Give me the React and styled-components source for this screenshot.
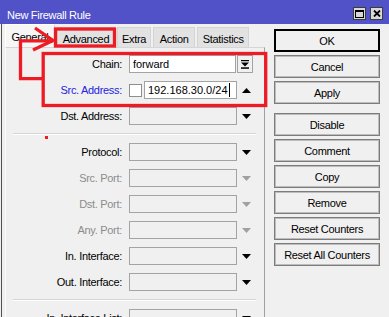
import React from 'react';
import styled, { createGlobalStyle } from 'styled-components';

const GlobalStyle = createGlobalStyle`
  html, body {
    margin: 0;
    padding: 0;
    background: #f0f0f0;
  }
  body {
    font-family: "Liberation Sans", Arial, sans-serif;
    font-size: 11px;
    letter-spacing: -0.3px;
    color: #000;
  }
`;

const Window = styled.div`
  position: relative;
  width: 389px;
  height: 317px;
  overflow: hidden;
  background: #f0f0f0;
  display: flex;
  flex-direction: column;
`;

const TitleBar = styled.div`
  height: 24px;
  flex: none;
  background: #5252c8;
  color: #fff;
  display: flex;
  align-items: flex-start;
  padding: 0 6px 0 7px;
`;

const Title = styled.div`
  margin-top: 9px;
  flex: 1;
`;

const TitleButton = styled.div`
  width: 13px;
  height: 13px;
  margin-top: 7px;
  margin-left: 4px;
  box-sizing: border-box;
  border: 1px solid #3c3c3c;
  background: #d8d8d8;
  display: flex;
  align-items: center;
  justify-content: center;
`;

const Body = styled.div`
  flex: 1;
  display: flex;
  margin-left: 1px;
  border-left: 1px solid #505050;
  min-height: 0;
`;

// left side: tabs + form
const TabArea = styled.div`
  margin-left: 3px;
  width: 260px;
  display: flex;
  flex-direction: column;
`;

const TabRow = styled.div`
  height: 24px;
  display: flex;
  align-items: flex-end;
  gap: 2px;
`;

const Tab = styled.div`
  box-sizing: border-box;
  height: ${(p) => (p.$active ? '23px' : '20px')};
  padding: 2px 4px 0;
  display: flex;
  align-items: center;
  justify-content: center;
  min-width: ${(p) => p.$w || 0}px;
  background: ${(p) => (p.$active ? '#f6f6f6' : '#e2e2e2')};
  border: 1px solid #d4d4d4;
  border-bottom: none;
  ${(p) => p.$active && 'border-left-color: #fff; border-top-color: #fff;'}
`;

const Panel = styled.div`
  flex: 1;
  border-top: 1px solid #d6d6d6;
  border-left: 1px solid #fafafa;
  border-right: 1px solid #a0a0a0;
  padding-top: 7px;
  display: flex;
  flex-direction: column;
  gap: 8px;
`;

const Row = styled.div`
  height: 18px;
  flex: none;
  display: flex;
  align-items: center;
`;

const Label = styled.div`
  width: 116px;
  margin-right: 7px;
  text-align: right;
  white-space: nowrap;
  color: ${(p) => (p.$tone === 'blue' ? '#2424e0' : p.$tone === 'off' ? '#8c8c8c' : '#000')};
`;

const Field = styled.div`
  box-sizing: border-box;
  width: ${(p) => p.$w || 108}px;
  height: 18px;
  border: 1px solid #a3a3a3;
  background: ${(p) => (p.$white ? '#fff' : '#f0f0f0')};
  display: flex;
  align-items: center;
  padding-left: 3px;
  letter-spacing: ${(p) => (p.$tight ? '0' : '-0.1px')};
  white-space: nowrap;
  overflow: hidden;
`;

const Caret = styled.span`
  display: inline-block;
  width: 1px;
  height: 14px;
  background: #000;
  margin-left: 1px;
`;

const Check = styled.div`
  box-sizing: border-box;
  width: 13px;
  height: 13px;
  border: 1px solid #8e8e8e;
  background: #fff;
  margin-right: 2px;
`;

const Slot = styled.div`
  width: 16px;
  padding-left: 5px;
  box-sizing: border-box;
  display: flex;
  align-items: center;
`;

const DropButton = styled.div`
  box-sizing: border-box;
  width: 16px;
  height: 18px;
  margin-left: 1px;
  border: 1px solid #a3a3a3;
  background: #f0f0f0;
  display: flex;
  align-items: center;
  justify-content: center;
`;

const Separator = styled.div`
  flex: none;
  height: 1px;
  margin: 0 8px 0 7px;
  background: #d6d6d6;
  border-bottom: 1px solid #fff;
`;

// right side: buttons
const ButtonColumn = styled.div`
  margin-left: 9px;
  padding-top: 5px;
  width: 106px;
  display: flex;
  flex-direction: column;
  gap: 3px;
`;

const Button = styled.div`
  box-sizing: border-box;
  height: 23px;
  flex: none;
  display: flex;
  align-items: center;
  justify-content: center;
  background: #f0f0f0;
  border: 1px solid ${(p) => (p.$primary ? '#000' : '#7c7c7c')};
  box-shadow: inset 0 0 0 1px ${(p) => (p.$primary ? '#000' : '#bdbdbd')};
  margin-top: ${(p) => (p.$spaced ? '6px' : '0')};
`;

const Annotations = styled.svg`
  position: absolute;
  left: 0;
  top: 0;
  pointer-events: none;
`;

const Arrow = ({ dir = 'down', off }) => (
  <svg width="9" height="5" viewBox="0 0 9 5">
    <polygon
      points={dir === 'down' ? '0,0 9,0 4.5,5' : '0,5 9,5 4.5,0'}
      fill={off ? '#a0a0a0' : '#000'}
    />
  </svg>
);

const rows = [
  { label: 'Protocol:' },
  { label: 'Src. Port:', off: true },
  { label: 'Dst. Port:', off: true },
  { label: 'Any. Port:', off: true },
  { label: 'In. Interface:' },
  { label: 'Out. Interface:' },
];

const buttons = ['OK', 'Cancel', 'Apply', 'Disable', 'Comment', 'Copy', 'Remove', 'Reset Counters', 'Reset All Counters'];

const App = () => {
  return (
    <Window>
      <GlobalStyle />
      <TitleBar>
        <Title>New Firewall Rule</Title>
        <TitleButton>
          <svg width="9" height="8" viewBox="0 0 9 8">
            <rect x="0.5" y="0.5" width="8" height="7" fill="none" stroke="#000" strokeWidth="1" />
            <rect x="0" y="0" width="9" height="2" fill="#000" />
          </svg>
        </TitleButton>
        <TitleButton>
          <svg width="8" height="7" viewBox="0 0 8 7">
            <path d="M1 0.5 L7 6.5 M7 0.5 L1 6.5" stroke="#000" strokeWidth="1.8" />
          </svg>
        </TitleButton>
      </TitleBar>

      <Body>
        <TabArea>
          <TabRow>
            <Tab $active $w={50}>General</Tab>
            <Tab $w={58}>Advanced</Tab>
            <Tab $w={34}>Extra</Tab>
            <Tab $w={42}>Action</Tab>
            <Tab $w={52}>Statistics</Tab>
          </TabRow>
          <Panel>
            <Row>
              <Label>Chain:</Label>
              <Field $w={107} $white>forward</Field>
              <DropButton>
                <svg width="8" height="9" viewBox="0 0 8 9">
                  <rect x="0" y="0" width="8" height="1.2" fill="#000" />
                  <polygon points="0,2.5 8,2.5 4,6.5" fill="#000" />
                  <rect x="0" y="7.3" width="8" height="1.5" fill="#000" />
                </svg>
              </DropButton>
            </Row>
            <Row>
              <Label $tone="blue">Src. Address:</Label>
              <Check />
              <Field $w={93} $white $tight>
                192.168.30.0/24
                <Caret />
              </Field>
              <Slot>
                <Arrow dir="up" />
              </Slot>
            </Row>
            <Row>
              <Label>Dst. Address:</Label>
              <Field />
              <Slot>
                <Arrow />
              </Slot>
            </Row>
            <Separator />
            {rows.map((r) => (
              <Row key={r.label}>
                <Label $tone={r.off ? 'off' : undefined}>{r.label}</Label>
                <Field />
                <Slot>
                  <Arrow off={r.off} />
                </Slot>
              </Row>
            ))}
            <Separator />
            <Row>
              <Label>In. Interface List:</Label>
              <Field />
              <Slot>
                <Arrow />
              </Slot>
            </Row>
          </Panel>
        </TabArea>

        <ButtonColumn>
          {buttons.map((b, i) => (
            <Button key={b} $primary={i === 0} $spaced={b === 'Disable'}>
              {b}
            </Button>
          ))}
        </ButtonColumn>
      </Body>

      {/* red markup drawn over the dialog */}
      <Annotations width="389" height="317" viewBox="0 0 389 317">
        <g fill="none" stroke="#ed1c24" strokeWidth="3.3" strokeLinejoin="miter">
          <rect x="55.5" y="29" width="59" height="17" />
          <rect x="43.2" y="53.5" width="222.5" height="52" />
          <polyline points="43,78.7 20.5,78.7 20.5,40.8 53,40.8" />
          <polyline points="35,28 53,40.5 33,50" />
        </g>
        <rect x="45" y="136" width="3" height="3" fill="#ed1c24" />
      </Annotations>
    </Window>
  );
};

export default App;
